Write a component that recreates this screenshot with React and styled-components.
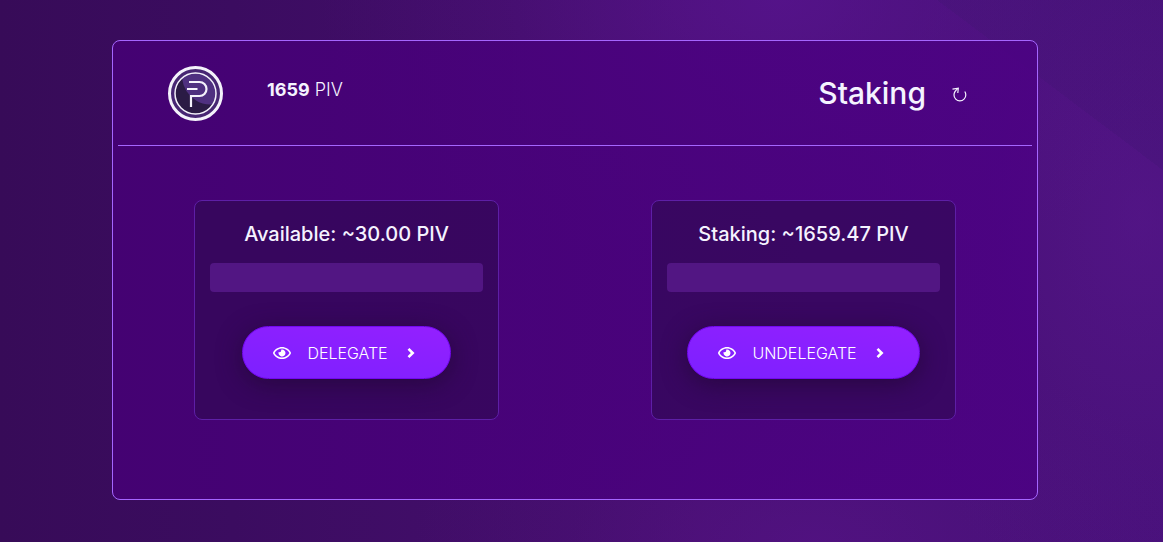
import React from "react";
import styled, { createGlobalStyle } from "styled-components";
import { FaRegEye } from "react-icons/fa";

const GlobalStyle = createGlobalStyle`
  * { box-sizing: border-box; }
  body {
    margin: 0;
    font-family: Inter, "Open Sans", sans-serif;
    color: #f5f3ff;
    background: #3a0c5c;
  }
`;

const Page = styled.main`
  min-height: 100vh;
  padding: 40px 125px 42px 112px;
  background:
    linear-gradient(217deg, rgba(66, 20, 116, 0.35) 12%, transparent 12%),
    radial-gradient(ellipse 460px 280px at 67% 0%, rgba(96, 22, 158, 0.5), rgba(96, 22, 158, 0.12) 60%, transparent),
    radial-gradient(ellipse 260px 420px at 98% 40%, rgba(96, 26, 150, 0.4), rgba(96, 26, 150, 0.1) 60%, transparent),
    radial-gradient(ellipse 400px 200px at 70% 100%, rgba(96, 22, 150, 0.35), rgba(96, 22, 150, 0.08) 60%, transparent),
    linear-gradient(90deg, #370b58 0%, #3b0c60 20%, #480f72 60%, #48117a 100%);
`;

const Panel = styled.section`
  display: flex;
  flex-direction: column;
  min-height: 460px;
  padding: 5px;
  border: 1px solid #a566ff;
  border-radius: 8px;
  background: linear-gradient(90deg, rgba(70, 0, 118, 0.86), rgba(76, 0, 132, 0.8));
`;

const Header = styled.header`
  display: flex;
  justify-content: space-between;
  height: 100px;
  padding: 20px 64px 0 50px;
  border-bottom: 1px solid #a566ff;
`;

const Group = styled.div`
  display: flex;
  align-items: flex-start;
  gap: ${(p) => p.$gap}px;
`;

const Logo = styled.svg`
  width: 55px;
  height: 55px;
`;

const Balance = styled.p`
  margin: 12px 0 0;
  font-size: 18px;
  line-height: 24px;
  font-weight: 300;
  strong { font-weight: 700; }
`;

const Title = styled.h1`
  margin: 9px 0 0;
  font-size: 30px;
  line-height: 36px;
  font-weight: 500;
`;

const Refresh = styled.button`
  display: flex;
  margin-top: 20px;
  padding: 0;
  border: 0;
  background: none;
  color: inherit;
  cursor: pointer;
`;

const Columns = styled.div`
  display: grid;
  grid-template-columns: 1fr 1fr;
  padding-top: 54px;
`;

const Card = styled.form`
  display: flex;
  flex-direction: column;
  align-items: center;
  justify-self: center;
  width: 66.66%;
  height: 220px;
  padding: 20px 15px;
  border: 1px solid #5e1fa6;
  border-radius: 8px;
  background: rgba(46, 10, 80, 0.62);
`;

const Label = styled.label`
  font-size: 20px;
  line-height: 26px;
  font-weight: 500;
  white-space: nowrap;
`;

const Amount = styled.input`
  width: 100%;
  height: 29px;
  margin: 16px 0 34px;
  padding: 0 8px;
  border: 0;
  border-radius: 4px;
  background: #521683;
  color: inherit;
  font: inherit;
`;

const Pill = styled.button`
  display: flex;
  align-items: center;
  gap: 16px;
  height: 53px;
  padding: 0 32px 0 30px;
  border: 1px solid #7408f2;
  border-radius: 27px;
  background: linear-gradient(10deg, #7c20ff, #9420ff);
  box-shadow: 0 5px 25px rgba(36, 8, 58, 0.8);
  color: #fff;
  font-family: inherit;
  font-size: 16px;
  line-height: 20px;
  font-weight: 300;
  cursor: pointer;
`;

function PivxLogo() {
  return (
    <Logo viewBox="0 0 55 55" role="img" aria-label="PIVX">
      <circle cx="27.5" cy="27.5" r="26" fill="#472673" stroke="#f4f2fb" strokeWidth="3" />
      <circle cx="27.5" cy="27.5" r="20.5" fill="#4f3080" />
      <path d="M14 12.2A20.5 20.5 0 1 0 45 38.3Q35 39 28 34.5Q16 27 14 12.2Z" fill="#2b1b45" />
      <circle cx="27.5" cy="27.5" r="20.5" fill="none" stroke="#f4f2fb" strokeWidth="1.5" />
      <path d="M21 16H31.500A7 7 0 0 1 31.500 30H23V41M19 23H29.500" fill="none" stroke="#f4f2fb" strokeWidth="2.2" />
    </Logo>
  );
}

function RefreshIcon() {
  return (
    <svg width="16" height="16" viewBox="0 0 16 16" fill="none" stroke="currentColor" strokeWidth="1.2" aria-hidden="true">
      <path d="M5.800 2.500Q2 5.500 2 9A5.900 5.900 0 0 0 13.800 9Q13.800 7 12.800 5.500" />
      <path d="M.5 3.200L6.300 2.200L5.800 7" />
    </svg>
  );
}

function Chevron() {
  return (
    <svg width="14" height="14" viewBox="0 0 14 14" fill="none" stroke="currentColor" strokeWidth="2.6" aria-hidden="true">
      <path d="M4.500 2.800L8.700 7L4.500 11.200" />
    </svg>
  );
}

function StakeCard({ id, label, action }) {
  return (
    <Card onSubmit={(e) => e.preventDefault()}>
      <Label htmlFor={id}>{label}</Label>
      <Amount id={id} type="text" inputMode="decimal" />
      <Pill type="submit">
        <FaRegEye size={18} aria-hidden="true" />
        <span>{action}</span>
        <Chevron />
      </Pill>
    </Card>
  );
}

export default function App() {
  return (
    <>
      <GlobalStyle />
      <Page>
        <Panel>
          <Header>
            <Group $gap={44}>
              <PivxLogo />
              <Balance><strong>1659</strong> PIV</Balance>
            </Group>
            <Group $gap={26}>
              <Title>Staking</Title>
              <Refresh type="button" aria-label="Refresh"><RefreshIcon /></Refresh>
            </Group>
          </Header>
          <Columns>
            <StakeCard id="delegate" label="Available: ~30.00 PIV" action="DELEGATE" />
            <StakeCard id="undelegate" label="Staking: ~1659.47 PIV" action="UNDELEGATE" />
          </Columns>
        </Panel>
      </Page>
    </>
  );
}
